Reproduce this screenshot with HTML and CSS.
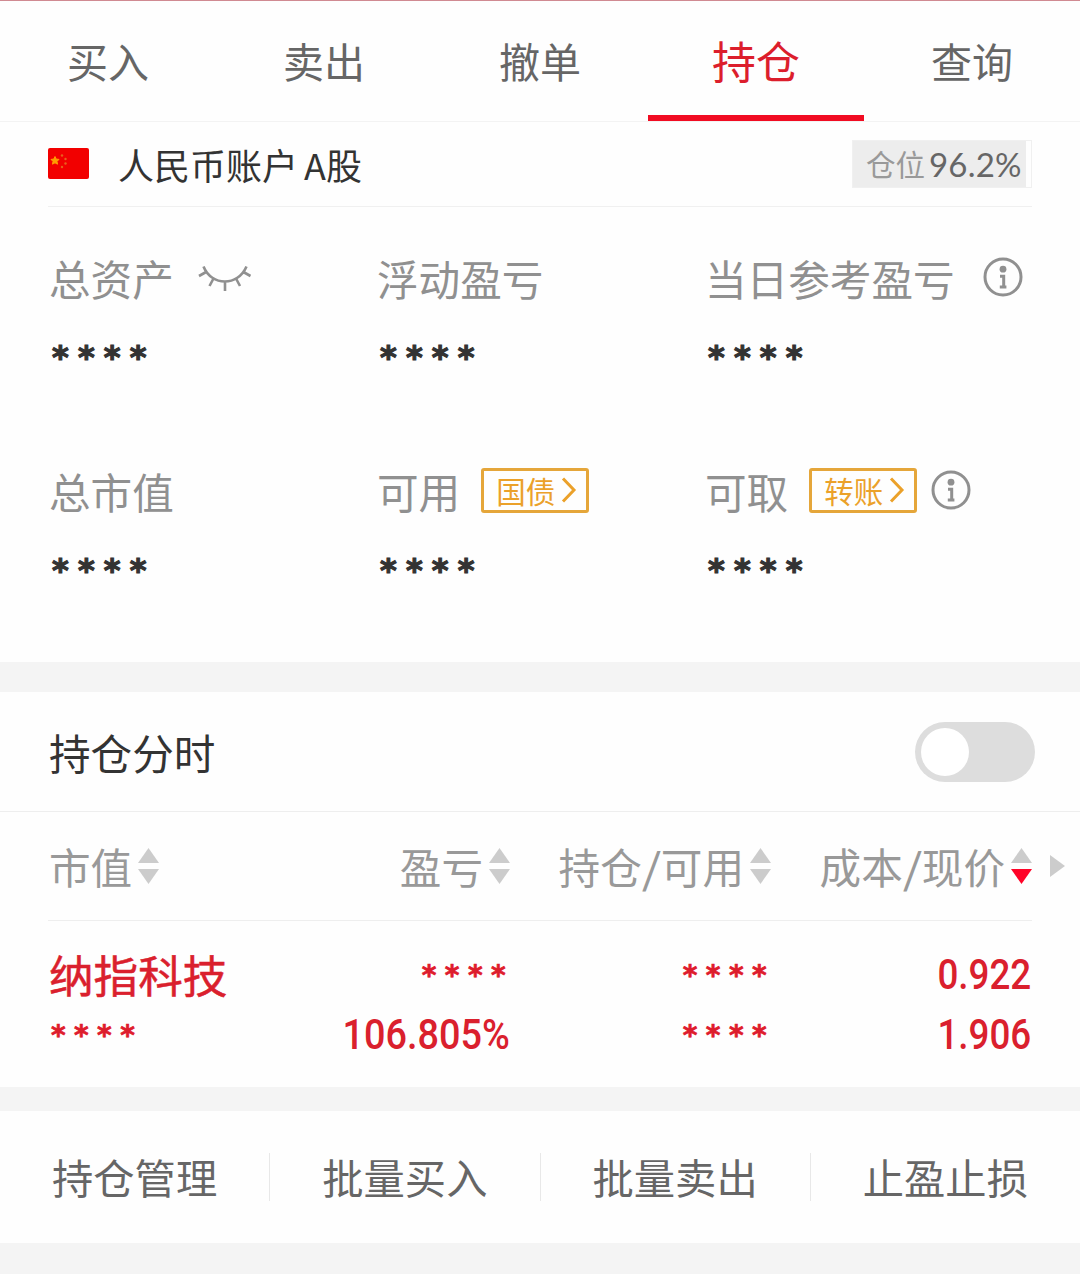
FILE: index.html
```html
<!DOCTYPE html>
<html lang="zh-CN">
<head>
<meta charset="utf-8">
<title>持仓</title>
<link rel="stylesheet" href="styles.css">
</head>
<body>
<svg width="0" height="0" class="defs" aria-hidden="true">
  <symbol id="info" viewBox="0 0 40 40">
    <circle cx="20" cy="20" r="18" fill="none" stroke="currentColor" stroke-width="3"/>
    <circle cx="20" cy="12.200" r="3.4" fill="currentColor"/>
    <path d="M17 19.300h3.700v10.200M16.800 30h6.600" fill="none" stroke="currentColor" stroke-width="3"/>
  </symbol>
  <symbol id="chevron" viewBox="0 0 16 26">
    <path d="M2 1.500l11 11.500L2 24.500" fill="none" stroke="currentColor" stroke-width="3"/>
  </symbol>
  <symbol id="sort" viewBox="0 0 21 36">
    <path d="M10.500 0L21 15H0z" fill="#ccc"/>
    <path d="M0 21h21L10.500 36z" fill="currentColor"/>
  </symbol>
</svg>

<nav class="tabs">
  <a class="tab">买入</a>
  <a class="tab">卖出</a>
  <a class="tab">撤单</a>
  <a class="tab active">持仓</a>
  <a class="tab">查询</a>
</nav>

<section class="account">
  <header class="account-head">
    <svg class="flag" viewBox="0 0 41 31">
      <rect width="41" height="31" rx="2" fill="#f20000"/>
      <path d="M7 8.500l1.200 2.600 2.800.3-2 2 .5 2.800L7 14.800l-2.500 1.400.5-2.800-2-2 2.800-.3z" fill="#ff9d00" stroke="#ff9d00"/>
      <g fill="#e8601c"><circle cx="14" cy="7.500" r="1.200"/><circle cx="17.500" cy="11" r="1.200"/><circle cx="17.500" cy="15.500" r="1.200"/><circle cx="14" cy="19" r="1.200"/></g>
    </svg>
    <h1 class="account-name">人民币账户<span class="market">A股</span></h1>
    <div class="ratio"><div class="ratio-fill"><span>仓位</span><b>96.2%</b></div></div>
  </header>
  <div class="metrics">
    <div class="metric">
      <div class="label">总资产
        <svg class="eye" viewBox="0 0 54 28" fill="none" stroke="currentColor" stroke-width="2.600">
          <path d="M5.500 1.500C13.500 21.500 40 21.500 48.500 1.500M9 6.500L1 11M15.500 13.500L11.500 21M27 16.500V26M38 13.500L42 21M44.500 6.500L52.500 11"/>
        </svg>
      </div>
      <div class="stars">****</div>
    </div>
    <div class="metric">
      <div class="label">浮动盈亏</div>
      <div class="stars">****</div>
    </div>
    <div class="metric">
      <div class="label">当日参考盈亏<svg class="info wide"><use href="#info"/></svg></div>
      <div class="stars">****</div>
    </div>
    <div class="metric">
      <div class="label">总市值</div>
      <div class="stars">****</div>
    </div>
    <div class="metric">
      <div class="label">可用<a class="link">国债<svg class="chevron"><use href="#chevron"/></svg></a></div>
      <div class="stars">****</div>
    </div>
    <div class="metric">
      <div class="label">可取<a class="link">转账<svg class="chevron"><use href="#chevron"/></svg></a><svg class="info"><use href="#info"/></svg></div>
      <div class="stars">****</div>
    </div>
  </div>
</section>

<section class="holdings">
  <header class="holdings-head">
    <h2>持仓分时</h2>
    <div class="toggle"><span class="knob"></span></div>
  </header>
  <div class="table-head">
    <div class="th">市值<svg class="sort"><use href="#sort"/></svg></div>
    <div class="th">盈亏<svg class="sort"><use href="#sort"/></svg></div>
    <div class="th">持仓<span class="slash">/</span>可用<svg class="sort"><use href="#sort"/></svg></div>
    <div class="th">成本<span class="slash">/</span>现价<svg class="sort sorted"><use href="#sort"/></svg></div>
    <svg class="more" viewBox="0 0 15 22"><path d="M0 0l15 11L0 22z" fill="#ccc"/></svg>
  </div>
  <div class="row">
    <div class="cell"><span class="name">纳指科技</span><span class="mask">****</span></div>
    <div class="cell"><span class="mask">****</span><span class="num percent">106.805%</span></div>
    <div class="cell"><span class="mask">****</span><span class="mask">****</span></div>
    <div class="cell"><span class="num">0.922</span><span class="num">1.906</span></div>
  </div>
</section>

<nav class="actions">
  <a>持仓管理</a>
  <a>批量买入</a>
  <a>批量卖出</a>
  <a>止盈止损</a>
</nav>
</body>
</html>
```
FILE: styles.css
```css
* { box-sizing: border-box; }

body {
  margin: 0;
  height: 1274px;
  overflow: hidden;
  background: #f4f4f4;
  font-family: "Noto Sans CJK SC", sans-serif;
  color: #333;
}

h1, h2 { margin: 0; font-weight: 400; }
svg { display: block; flex: none; }
.defs { position: absolute; }

.tabs {
  display: flex;
  height: 122px;
  background: #fefefe;
  border-top: 1px solid #d08a92;
  border-bottom: 1px solid #f3f3f3;
}
.tab {
  flex: 1;
  height: 120px;
  border-bottom: 6px solid transparent;
  text-align: center;
  font-size: 41px;
  line-height: 119px;
  color: #666;
}
.tab.active { font-size: 44px; color: #dc1e2c; border-color: #f10c22; }

.account { height: 540px; padding: 0 48px; background: #fefefe; }
.account-head {
  display: flex;
  align-items: center;
  height: 85px;
  border-bottom: 1px solid #f0f0f0;
}
.flag { width: 41px; height: 31px; margin-bottom: 1px; }
.account-name {
  margin-left: 29px;
  font-size: 36px;
  line-height: 80px;
}
.market { margin-left: 6px; }
.ratio {
  width: 180px;
  height: 48px;
  margin-left: auto;
  border: 1px solid #f0f0f0;
}
.ratio-fill {
  display: flex;
  align-items: center;
  width: 173px;
  height: 46px;
  padding-left: 13px;
  background: #ededed;
  line-height: 46px;
  white-space: nowrap;
}
.ratio-fill span { font-size: 29.500px; line-height: 44px; height: 46px; color: #999; }
.ratio-fill b {
  margin-left: 4px;
  font: 400 33px/44px "Lato", sans-serif;
  letter-spacing: 0.200px;
  color: #666;
}

.metrics {
  display: grid;
  grid-template-columns: repeat(3, 328px);
  grid-auto-rows: 213px;
  padding-top: 41px;
}
.label {
  display: flex;
  align-items: center;
  height: 60px;
  padding-left: 1px;
  font-size: 41.600px;
  line-height: 60px;
  color: #909090;
  white-space: nowrap;
}
.eye { width: 54px; height: 28px; margin: 2px 0 0 24px; }
.info { width: 40px; height: 40px; margin: 0 0 2px 14px; }
.info.wide { margin-left: 28px; }
.link {
  display: flex;
  align-items: center;
  width: 108px;
  height: 45px;
  margin: 0 0 2px 21px;
  padding-left: 12px;
  border: 3px solid #e5a63a;
  border-radius: 3px;
  font-size: 29.500px;
  line-height: 37px;
  color: #eba12a;
}
.chevron { width: 16px; height: 26px; margin-left: 6px; }
.stars {
  margin-top: 19px;
  height: 60px;
  padding-left: 4px;
  font: 700 32px/60px "DejaVu Sans", sans-serif;
  letter-spacing: 9.200px;
  -webkit-text-stroke: 1.200px #333;
  color: #333;
}

.holdings { height: 395px; margin-top: 30px; background: #fefefe; }
.holdings-head {
  display: flex;
  justify-content: space-between;
  align-items: center;
  height: 120px;
  padding: 0 45px 0 49px;
  border-bottom: 1px solid #eee;
}
.holdings-head h2 { font-size: 41.600px; line-height: 60px; }
.toggle {
  width: 120px;
  height: 60px;
  padding: 6px;
  border-radius: 30px;
  background: #ddd;
}
.knob { display: block; width: 48px; height: 48px; border-radius: 50%; background: #fff; }

.table-head, .row {
  display: grid;
  grid-template-columns: 201px 261px 261px 261px 33px;
  margin-left: 48px;
}
.table-head {
  height: 109px;
  padding-bottom: 2px;
  background: linear-gradient(#eee, #eee) left bottom / 984px 1px no-repeat;
  align-items: center;
}
.th {
  display: flex;
  justify-content: flex-end;
  align-items: center;
  font-size: 41.600px;
  line-height: 60px;
  color: #999;
  white-space: nowrap;
}
.th:first-child { justify-content: flex-start; padding-left: 1px; }
.slash { width: 19px; transform: scaleX(1.200); transform-origin: center; text-align: center; }
.sort { width: 21px; height: 36px; margin-left: 6px; color: #ccc; }
.sorted { color: #ff0428; }
.more { width: 15px; height: 22px; margin-left: 18px; }

.row { padding-top: 24px; }
.cell {
  display: flex;
  flex-direction: column;
  align-items: flex-end;
  height: 120px;
  line-height: 60px;
  color: #da202d;
}
.cell:first-child { align-items: flex-start; }
.cell span { height: 60px; white-space: nowrap; }
.name {
  padding-left: 1px;
  font-size: 44.600px;
  line-height: 58px;
  -webkit-text-stroke: 0.500px #da202d;
}
.mask {
  padding: 0 3px;
  margin-right: -7px;
  font: 700 28px/62px "DejaVu Sans", sans-serif;
  letter-spacing: 8.400px;
  -webkit-text-stroke: 0.700px #e4142a;
}
.num {
  font: 500 42px/60px Roboto, sans-serif;
  transform: scaleX(0.875);
  transform-origin: right;
  margin-right: 1px;
}
.percent { transform: scaleX(0.900); margin-right: 0; }

.actions {
  display: flex;
  align-items: center;
  height: 132px;
  margin-top: 24px;
  background: #fefefe;
}
.actions a {
  flex: 1 1 0;
  height: 48px;
  border-right: 1px solid #e8e8e8;
  text-align: center;
  font-size: 41.300px;
  line-height: 47px;
  color: #666;
}
.actions a:last-child { border: 0; }
```
